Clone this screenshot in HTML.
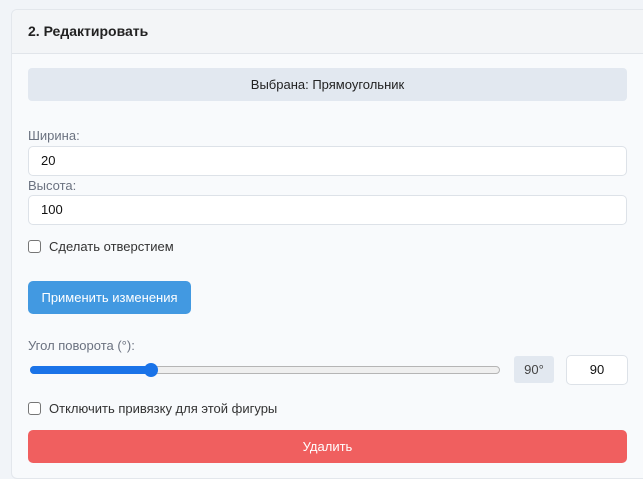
<!DOCTYPE html>
<html><head><meta charset="utf-8"><style>
*{box-sizing:border-box;margin:0;padding:0}
body{width:643px;height:469px;background:#f1f4f8;font-family:"Liberation Sans",sans-serif;position:relative;overflow:hidden}
.card{position:absolute;left:11px;top:9px;width:640px;height:470px;background:#f8fafc;border:1px solid #e3e7ec;border-radius:6px}
.hdr{position:absolute;left:0;top:0;right:0;height:44px;background:#f3f5f7;border-bottom:1px solid #e1e5ea;border-radius:6px 6px 0 0}
.abs{position:absolute}
.hdr span{position:absolute;left:16px;top:13px;font-size:14px;font-weight:bold;color:#222}
.sel{left:16px;top:58px;width:599px;height:33px;background:#e2e8f0;border-radius:4px;text-align:center;line-height:33px;font-size:13px;color:#222}
.lbl{font-size:13px;color:#6b7280}
.inp{width:599px;height:30px;background:#fff;border:1px solid #dde2e8;border-radius:5px;font-size:13px;color:#111;padding-left:12px;line-height:28px}
.cb{width:13px;height:13px;border:1px solid #767676;border-radius:3px;background:#fff}
.btn{background:#4299e1;color:#fff;border-radius:5px;font-size:13px;text-align:center}
</style></head><body>
<div class="card">
<div class="hdr"><span>2. Редактировать</span></div>
<div class="abs sel">Выбрана: Прямоугольник</div>
<div class="abs lbl" style="left:16px;top:118px">Ширина:</div>
<div class="abs inp" style="left:16px;top:136px">20</div>
<div class="abs lbl" style="left:16px;top:168px">Высота:</div>
<div class="abs inp" style="left:16px;top:185px">100</div>
<div class="abs cb" style="left:16px;top:230px"></div>
<div class="abs" style="left:37px;top:229px;font-size:13px;color:#333">Сделать отверстием</div>
<div class="abs btn" style="left:16px;top:271px;width:163px;height:33px;line-height:33px">Применить изменения</div>
<div class="abs lbl" style="left:16px;top:328px">Угол поворота (°):</div>
<div class="abs" style="left:18px;top:356px;width:470px;height:8px;background:#efefef;border:1px solid #b5b5b5;border-radius:4px"></div>
<div class="abs" style="left:18px;top:356px;width:122px;height:8px;background:#1a73e8;border-radius:4px"></div>
<div class="abs" style="left:132px;top:353px;width:14px;height:14px;background:#1a73e8;border-radius:50%"></div>
<div class="abs" style="left:502px;top:346px;width:40px;height:27px;background:#e2e8f0;border-radius:3px;font-size:13px;color:#444;text-align:center;line-height:27px">90°</div>
<div class="abs inp" style="left:554px;top:345px;width:62px;height:30px;padding:0;text-align:center">90</div>
<div class="abs cb" style="left:16px;top:392px"></div>
<div class="abs" style="left:37px;top:391px;font-size:13px;color:#333">Отключить привязку для этой фигуры</div>
<div class="abs btn" style="left:16px;top:420px;width:599px;height:33px;line-height:33px;background:#f05f5f">Удалить</div>
</div>
</body></html>
